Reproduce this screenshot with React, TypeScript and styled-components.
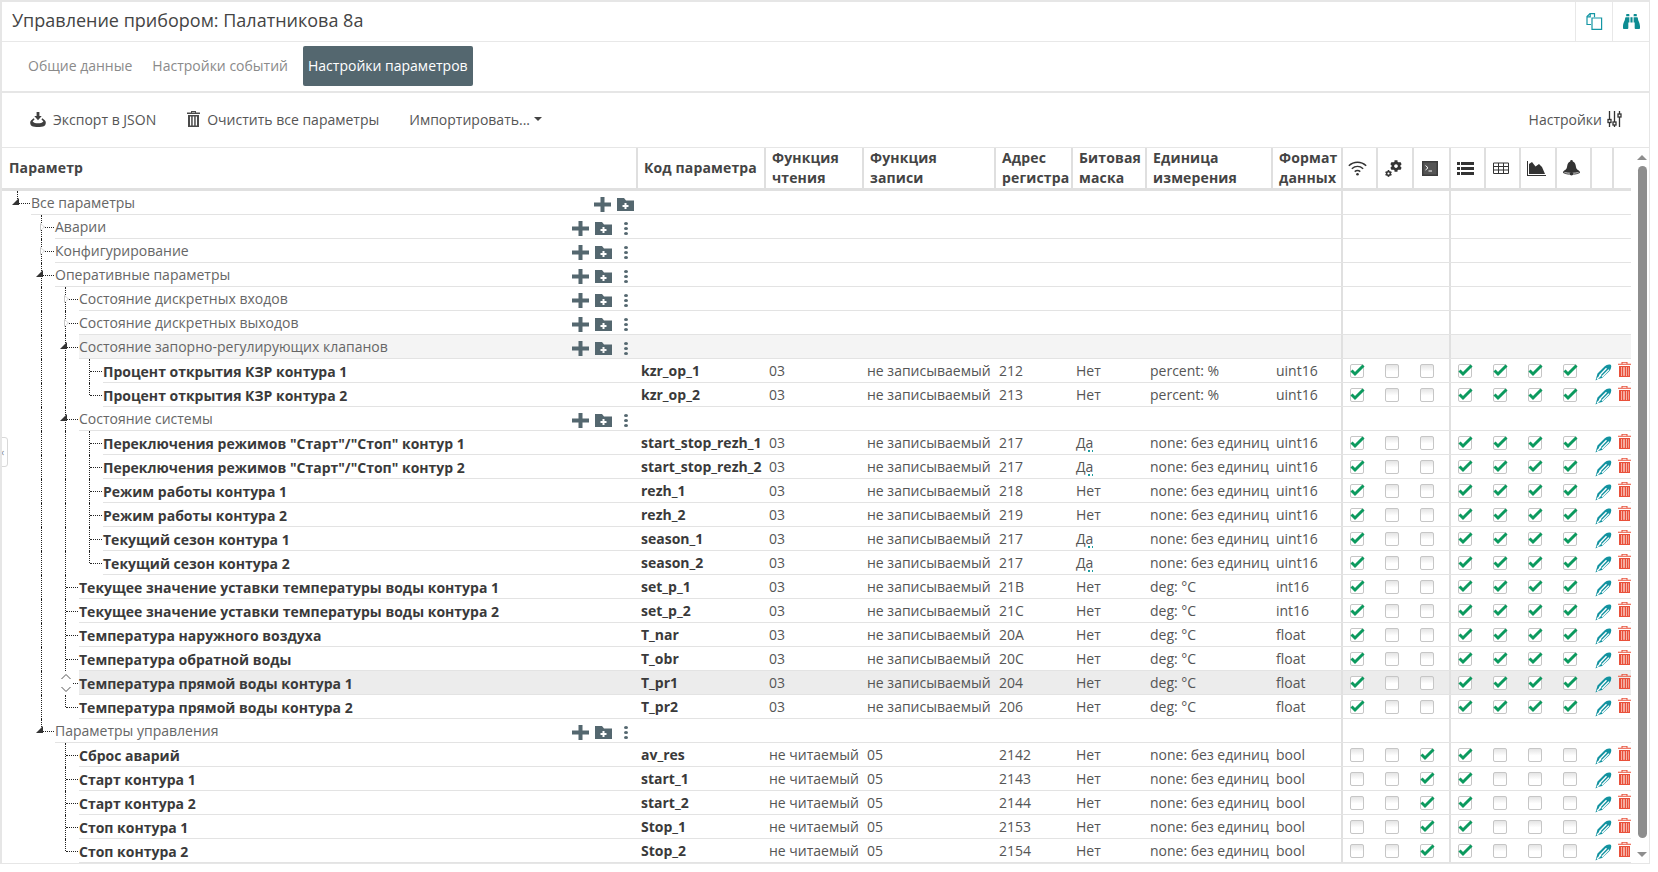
import React from 'react';
import styled, { createGlobalStyle } from 'styled-components';
import { FaBinoculars, FaCog } from 'react-icons/fa';

const GlobalStyle = createGlobalStyle`
  html, body {
    margin: 0;
    padding: 0;
    background: #fff;
    overflow: hidden;
  }
  body {
    font-family: "Open Sans", "Liberation Sans", sans-serif;
    font-size: 14px;
    color: #555;
  }
`;

const COLUMNS = '634px 128px 98px 132px 77px 74px 126px 70px 35px 36px 37px 35px 35px 36px 35px 22px 19px';

const Page = styled.div`
  position: relative;
  width: 1650px;
  height: 864px;
  box-sizing: border-box;
  border: 1px solid #e6e6e6;
  border-top-width: 2px;
  border-left-width: 2px;
  overflow: hidden;
`;

const TitleBar = styled.div`
  height: 39px;
  display: flex;
  align-items: center;
  border-bottom: 1px solid #e8e8e8;
`;

const Title = styled.h1`
  flex: 1;
  margin: 0 0 4px 10px;
  font-size: 18px;
  font-weight: 400;
  color: #444;
`;

const TitleButton = styled.div`
  width: 36px;
  height: 39px;
  display: flex;
  align-items: center;
  justify-content: center;
  border-left: 1px solid #e8e8e8;
  color: #0d8c92;
`;

const Tabs = styled.div`
  height: 51px;
  display: flex;
  align-items: flex-start;
  padding: 4px 0 0 21px;
  box-sizing: border-box;
  border-bottom: 2px solid #e6e6e6;
`;

const Tab = styled.div<{ $active?: boolean }>`
  height: 40px;
  line-height: 39px;
  padding: 0 5px;
  margin-right: 10px;
  border-radius: 2px;
  color: ${(p) => (p.$active ? '#fff' : '#8a8a8a')};
  background: ${(p) => (p.$active ? '#54676f' : 'transparent')};
`;

const Toolbar = styled.div`
  height: 55px;
  display: flex;
  align-items: center;
  padding: 0 27px 2px 28px;
  box-sizing: border-box;
  border-bottom: 1px solid #e6e6e6;
`;

const ToolButton = styled.div`
  display: flex;
  align-items: center;
  gap: 7px;
  margin-right: 30px;
  color: #555;
  white-space: nowrap;
  &:first-child {
    margin-right: 31px;
  }
`;

const SettingsButton = styled(ToolButton)`
  margin: 0 0 0 auto;
  gap: 5px;
`;

const Caret = styled.span`
  width: 0;
  height: 0;
  margin-left: -3px;
  border-left: 4px solid transparent;
  border-right: 4px solid transparent;
  border-top: 4px solid #444;
`;

const HeaderRow = styled.div`
  width: 1629px;
  height: 43px;
  display: grid;
  grid-template-columns: ${COLUMNS};
  box-sizing: border-box;
  border-bottom: 3px solid #e0e0e0;
`;

const HeaderCell = styled.div`
  display: flex;
  align-items: center;
  padding: 0 0 0 6px;
  box-sizing: border-box;
  border-left: 2px solid #dfdfdf;
  font-weight: 700;
  line-height: 20px;
  color: #444;
  letter-spacing: 0.01em;
  white-space: pre-line;
  &:first-child {
    border-left: 0;
    padding-left: 7px;
  }
`;

const IconCell = styled(HeaderCell)`
  justify-content: center;
  padding: 0 4px 0 0;
  color: #333;
`;

const Body = styled.div`
  position: relative;
`;

const Row = styled.div<{ $level: number; $tint?: string }>`
  position: relative;
  width: 1629px;
  height: 24px;
  display: grid;
  grid-template-columns: ${COLUMNS};
  line-height: 23px;
  &::before {
    content: '';
    position: absolute;
    top: 0;
    bottom: 0;
    right: 0;
    left: ${(p) => 29 + p.$level * 24}px;
    background: ${(p) => p.$tint || 'transparent'};
    border-bottom: 1px solid #e3e3e3;
  }
`;

const TreeCell = styled.div<{ $level: number; $leaf: boolean }>`
  position: relative;
  display: flex;
  align-items: center;
  padding-left: ${(p) => 29 + p.$level * 24}px;
  padding-right: ${(p) => (p.$level === 0 ? 2 : 8)}px;
  color: ${(p) => (p.$leaf ? '#3a3a3a' : '#666')};
  font-weight: ${(p) => (p.$leaf ? 700 : 400)};
  white-space: nowrap;
`;

const Label = styled.span<{ $leaf: boolean }>`
  position: relative;
  top: ${(p) => (p.$leaf ? 0 : -1)}px;
  flex: 1;
`;

const VLine = styled.i<{ $level: number; $half?: boolean }>`
  position: absolute;
  top: 0;
  left: ${(p) => 15 + p.$level * 24}px;
  height: ${(p) => (p.$half ? '12px' : '24px')};
  border-left: 1px dotted #222;
`;

const HLine = styled.i<{ $level: number }>`
  position: absolute;
  top: 12px;
  left: ${(p) => 16 + p.$level * 24}px;
  width: 12px;
  border-top: 1px dotted #222;
`;

const Opened = styled.i<{ $level: number }>`
  position: absolute;
  top: 7px;
  left: ${(p) => 10 + p.$level * 24}px;
  width: 0;
  height: 0;
  border-bottom: 7px solid #333;
  border-left: 7px solid transparent;
`;

const Closed = styled.i<{ $level: number }>`
  position: absolute;
  top: 8px;
  left: ${(p) => 14 + p.$level * 24}px;
  width: 0;
  height: 0;
  border-left: 5px solid #c8c8c8;
  border-top: 4px solid transparent;
  border-bottom: 4px solid transparent;
  &::after {
    content: '';
    position: absolute;
    top: -3px;
    left: -4px;
    width: 0;
    height: 0;
    border-left: 3px solid #fff;
    border-top: 3px solid transparent;
    border-bottom: 3px solid transparent;
  }
`;

const SortArrows = styled.div`
  position: absolute;
  top: 0;
  left: 57px;
  width: 14px;
  height: 24px;
  background: #fff;
  color: #555;
`;

const Actions = styled.div`
  position: relative;
  top: 1px;
  display: flex;
  align-items: center;
  color: #54676f;
`;

const ActionIcon = styled.svg`
  display: block;
  margin-left: 6px;
  fill: currentColor;
`;

const Dots = styled.div`
  width: 4px;
  margin-left: 12px;
  display: flex;
  flex-direction: column;
  gap: 2px;
  i {
    display: block;
    width: 4px;
    height: 3px;
    border-radius: 50%;
    background: #54676f;
  }
`;

const TextCell = styled.div`
  position: relative;
  padding-left: 5px;
  color: #555;
  white-space: nowrap;
  overflow: hidden;
`;

const CodeCell = styled(TextCell)`
  font-weight: 700;
  color: #3a3a3a;
`;

const BitValue = styled.span<{ $yes: boolean }>`
  text-decoration: ${(p) => (p.$yes ? 'underline dotted #1f9da0 2px' : 'none')};
  text-underline-offset: 2px;
`;

const FlagCell = styled.div<{ $divider?: boolean; $pad?: number }>`
  position: relative;
  display: flex;
  align-items: center;
  padding-left: ${(p) => p.$pad ?? 7}px;
  height: 23px;
  border-left: ${(p) => (p.$divider ? '2px solid #e0e0e0' : '2px solid transparent')};
`;

const FolderDivider = styled(FlagCell)`
  display: block;
`;

const EditCell = styled.div<{ $shift: number; $lift: number }>`
  position: relative;
  top: ${(p) => p.$lift}px;
  display: flex;
  align-items: center;
  padding-left: ${(p) => p.$shift}px;
`;

const Check = styled.span<{ $on: boolean }>`
  position: relative;
  width: 14px;
  height: 14px;
  box-sizing: border-box;
  border: 1px solid #c6c6c6;
  border-radius: 2px;
  background: ${(p) => (p.$on ? '#fff' : 'linear-gradient(#e4e4e4, #fff 55%)')};
  svg {
    position: absolute;
    left: -1px;
    top: -2px;
  }
`;

const ScrollBar = styled.div`
  position: absolute;
  top: 147px;
  right: 0;
  width: 18px;
  bottom: 0;
`;

const ScrollThumb = styled.div`
  position: absolute;
  top: 17px;
  left: 7px;
  width: 9px;
  height: 672px;
  border-radius: 5px;
  background: #8e8e8e;
`;

const ScrollArrow = styled.i<{ $down?: boolean }>`
  position: absolute;
  left: 6px;
  width: 0;
  height: 0;
  border-left: 5px solid transparent;
  border-right: 5px solid transparent;
  ${(p) => (p.$down ? 'bottom: 6px; border-top: 5px solid #8e8e8e;' : 'top: 6px; border-bottom: 5px solid #8e8e8e;')}
`;

const SideHandle = styled.div`
  position: absolute;
  top: 435px;
  left: -2px;
  width: 8px;
  height: 30px;
  box-sizing: border-box;
  border: 1px solid #d8d8d8;
  border-radius: 0 3px 3px 0;
  background: #fff;
  color: #888;
  font-size: 11px;
  line-height: 28px;
`;

const CopyIcon = () => (
  <svg width="17" height="17" viewBox="0 0 17 17" fill="none" stroke="#1496a4" strokeWidth="1.2">
    <path d="M5 11.5H1V3.5L4 .7h4.5v3.6" />
    <path d="M1 3.8h3.2V.8" />
    <path d="M6 5h9.600v11.400H6z" />
  </svg>
);

const ExportIcon = () => (
  <svg width="16" height="15" viewBox="0 0 16 15" fill="#3f3f3f">
    <path d="M6.6 0h2.8v4h2.3L8 8.2 4.3 4h2.3z" />
    <path d="M3.6 6.2 1 8.5C-.6 10 .2 14 3 14.6c3 .6 7 .6 10 0 2.8-.6 3.6-4.6 2-6.1l-2.6-2.3-1 1 2 2.2c-2 2.6-8.800 2.6-10.800 0l2-2.200z" />
  </svg>
);

const TrashTool = () => (
  <svg width="13" height="16" viewBox="0 0 13 16" fill="#4a4a4a">
    <path d="M4 0h5v1.500h4V3H0V1.500h4zM5 .9v.7h3V.9z" />
    <path d="M1 4h11v12H1zM3 5.500v9h1.200v-9zm2.700 0v9h1.500v-9zm3 0v9h1.300v-9z" fillRule="evenodd" />
  </svg>
);

const SlidersIcon = () => (
  <svg width="15" height="16" viewBox="0 0 15 16" fill="none" stroke="#333" strokeWidth="1.300">
    <path d="M2.500 0v16M7.500 0v16M12.500 0v16" />
    <rect x="1" y="8.500" width="3" height="3" fill="#fff" />
    <rect x="6" y="11" width="3" height="3" fill="#fff" />
    <rect x="11" y="3" width="3" height="3" fill="#fff" />
  </svg>
);

const WifiIcon = () => (
  <svg width="19" height="15" viewBox="0 0 19 15" fill="none" stroke="#333" strokeWidth="1.400">
    <path d="M.8 4.800c5-4.700 12.400-4.700 17.400 0" />
    <path d="M3.800 7.800c3.400-3 8-3 11.400 0" />
    <path d="M6.700 10.600c1.700-1.300 3.900-1.300 5.600 0" />
    <circle cx="9.500" cy="13.300" r="1.300" fill="#333" stroke="none" />
  </svg>
);

const GearsBox = styled.div`
  position: relative;
  width: 17px;
  height: 17px;
  svg {
    position: absolute;
  }
  svg:first-child {
    top: 0;
    right: 0;
  }
  svg:last-child {
    bottom: 0;
    left: 0;
  }
`;

const GearsIcon = () => (
  <GearsBox>
    <FaCog size={12} />
    <FaCog size={7} />
  </GearsBox>
);

const TerminalIcon = () => (
  <svg width="16" height="15" viewBox="0 0 16 15">
    <rect width="16" height="15" fill="#3c3c3c" />
    <rect x="1.500" y="1.500" width="13" height="12" fill="#555" />
    <path d="M3.500 4.500 6 6.800 3.500 9" fill="none" stroke="#fff" strokeWidth="1" />
    <path d="M6.500 10h3.500" stroke="#fff" strokeWidth="1" />
  </svg>
);

const ListIcon = () => (
  <svg width="17" height="13" viewBox="0 0 17 13" fill="#333">
    <path d="M0 0h3v3H0zM4 0h13v3H4zM0 5h3v3H0zM4 5h13v3H4zM0 10h3v3H0zM4 10h13v3H4z" />
  </svg>
);

const TableIcon = () => (
  <svg width="16" height="12" viewBox="0 0 16 12" fill="none" stroke="#333" strokeWidth="1">
    <path d="M.5 1h15v10.500H.500zM.5 4.500h15M.5 8h15M5.500 1v10.500M10.500 1v10.500" />
  </svg>
);

const ChartIcon = () => (
  <svg width="19" height="15" viewBox="0 0 19 15" fill="#333">
    <path d="M0 0h1v14h18v1H0z" />
    <path d="M2 13V3l3-2 3.500 4.500L12 3l3 3 3 7z" />
  </svg>
);

const BellIcon = () => (
  <svg width="17" height="16" viewBox="0 0 17 16" fill="#333">
    <path d="M8.500 0a1.300 1.300 0 0 1 1.300 1.400C12 2.300 12.600 4 12.800 6c.2 2 .9 3 2 4 1.500.9 2.200 1.500 2.200 2.200 0 1.400-3.800 2.300-8.500 2.300S0 13.600 0 12.200c0-.7.700-1.300 2.200-2.200 1.100-1 1.800-2 2-4 .2-2 .8-3.700 3-4.600A1.300 1.300 0 0 1 8.500 0z" />
    <path d="M1.500 12.400c2 1.100 12 1.100 14 0" fill="none" stroke="#fff" strokeWidth=".8" />
    <circle cx="8.500" cy="13.800" r="1.800" />
  </svg>
);

const PlusIcon = () => (
  <ActionIcon width="17" height="15" viewBox="0 0 17 15">
    <path d="M6.500 0h4v5.500H17v4h-6.500V15h-4V9.500H0v-4h6.500z" />
  </ActionIcon>
);

const FolderPlusIcon = () => (
  <ActionIcon width="17" height="13" viewBox="0 0 17 13">
    <path d="M0 0h7l2 2.500h8V13H0zM7.500 5v2H5.500v2h2v2h2V9h2V7h-2V5z" fillRule="evenodd" />
  </ActionIcon>
);

const DotsIcon = () => (
  <Dots>
    <i />
    <i />
    <i />
  </Dots>
);

const PencilIcon = () => (
  <svg width="17" height="17" viewBox="0 0 17 17">
    <path d="M.5 16.500 2.500 9.500 9.500 2.500C11.500.7 14 0 16 1c.8 2-.2 4.500-2 6.500l-7 6.500-4 1z" fill="#1293a0" />
    <path d="M4.300 11.800 11.500 4.300M7 12.800l7-7.200M2 15 6 11" stroke="#fff" strokeWidth="1.300" fill="none" />
  </svg>
);

const TrashRed = () => (
  <svg width="13" height="15" viewBox="0 0 13 15" fill="#e9503a">
    <path d="M3.500 0h6v1.800H13v1H0v-1h3.500zm1 .8v1h4v-1z" fillRule="evenodd" />
    <path d="M1 4h11v11H1zm2 1.200v8.600h1V5.200zm2.500 0v8.600h1V5.200zm2.500 0v8.600h1V5.200z" fillRule="evenodd" />
    <path d="M3 5.200h1v8.600H3zM5.500 5.200h1v8.600h-1zM8 5.200h1v8.600H8zM10.200 5.200h.8v8.600h-.8z" fill="#f6b0a4" />
  </svg>
);

const CheckMark = () => (
  <svg width="15" height="14" viewBox="0 0 15 14" fill="none" stroke="#0b9a5e" strokeWidth="3">
    <path d="M1.500 7.500 5 11 13.500 2.500" />
  </svg>
);

const Chevrons = () => (
  <svg width="14" height="24" viewBox="0 0 14 24" fill="none" stroke="#555" strokeWidth="1">
    <path d="M2.500 8 7 3.500 11.500 8M2.500 16 7 20.500 11.500 16" />
  </svg>
);

type Param = {
  code: string;
  read: string;
  write: string;
  addr: string;
  bit: string;
  unit: string;
  format: string;
  flags: string;
};

type TreeRow = {
  label: string;
  level: number;
  open?: boolean;
  tint?: string;
  sort?: boolean;
  param?: Param;
};

const NONE = 'none: без единиц';
const NW = 'не записываемый';
const NR = 'не читаемый';

function readable(code: string, addr: string, bit: string, unit: string, format: string): Param {
  return { code, read: '03', write: NW, addr, bit, unit, format, flags: '1001111' };
}

function writable(code: string, addr: string): Param {
  return { code, read: NR, write: '05', addr, bit: 'Нет', unit: NONE, format: 'bool', flags: '0011000' };
}

const ROWS: TreeRow[] = [
  { label: 'Все параметры', level: 0, open: true },
  { label: 'Аварии', level: 1 },
  { label: 'Конфигурирование', level: 1 },
  { label: 'Оперативные параметры', level: 1, open: true },
  { label: 'Состояние дискретных входов', level: 2 },
  { label: 'Состояние дискретных выходов', level: 2 },
  { label: 'Состояние запорно-регулирующих клапанов', level: 2, open: true, tint: '#f4f4f4' },
  { label: 'Процент открытия КЗР контура 1', level: 3, param: readable('kzr_op_1', '212', 'Нет', 'percent: %', 'uint16') },
  { label: 'Процент открытия КЗР контура 2', level: 3, param: readable('kzr_op_2', '213', 'Нет', 'percent: %', 'uint16') },
  { label: 'Состояние системы', level: 2, open: true },
  { label: 'Переключения режимов "Старт"/"Стоп" контур 1', level: 3, param: readable('start_stop_rezh_1', '217', 'Да', NONE, 'uint16') },
  { label: 'Переключения режимов "Старт"/"Стоп" контур 2', level: 3, param: readable('start_stop_rezh_2', '217', 'Да', NONE, 'uint16') },
  { label: 'Режим работы контура 1', level: 3, param: readable('rezh_1', '218', 'Нет', NONE, 'uint16') },
  { label: 'Режим работы контура 2', level: 3, param: readable('rezh_2', '219', 'Нет', NONE, 'uint16') },
  { label: 'Текущий сезон контура 1', level: 3, param: readable('season_1', '217', 'Да', NONE, 'uint16') },
  { label: 'Текущий сезон контура 2', level: 3, param: readable('season_2', '217', 'Да', NONE, 'uint16') },
  { label: 'Текущее значение уставки температуры воды контура 1', level: 2, param: readable('set_p_1', '21B', 'Нет', 'deg: °C', 'int16') },
  { label: 'Текущее значение уставки температуры воды контура 2', level: 2, param: readable('set_p_2', '21C', 'Нет', 'deg: °C', 'int16') },
  { label: 'Температура наружного воздуха', level: 2, param: readable('T_nar', '20A', 'Нет', 'deg: °C', 'float') },
  { label: 'Температура обратной воды', level: 2, param: readable('T_obr', '20C', 'Нет', 'deg: °C', 'float') },
  { label: 'Температура прямой воды контура 1', level: 2, tint: '#ececec', sort: true, param: readable('T_pr1', '204', 'Нет', 'deg: °C', 'float') },
  { label: 'Температура прямой воды контура 2', level: 2, param: readable('T_pr2', '206', 'Нет', 'deg: °C', 'float') },
  { label: 'Параметры управления', level: 1, open: true },
  { label: 'Сброс аварий', level: 2, param: writable('av_res', '2142') },
  { label: 'Старт контура 1', level: 2, param: writable('start_1', '2143') },
  { label: 'Старт контура 2', level: 2, param: writable('start_2', '2144') },
  { label: 'Стоп контура 1', level: 2, param: writable('Stop_1', '2153') },
  { label: 'Стоп контура 2', level: 2, param: writable('Stop_2', '2154') },
];

// a guide of this level goes on past the row while a sibling is still to come
function guideContinues(index: number, level: number) {
  for (let i = index + 1; i < ROWS.length; i += 1) {
    if (ROWS[i].level === level) return true;
    if (ROWS[i].level < level) return false;
  }
  return false;
}

const TreeGuides: React.FC<{ index: number; row: TreeRow }> = ({ index, row }) => {
  const levels = Array.from({ length: row.level + 1 }, (_, i) => i);
  return (
    <>
      {levels.map((level) => {
        const goesOn = guideContinues(index, level);
        if (level < row.level) {
          return goesOn ? <VLine key={level} $level={level} /> : null;
        }
        return <VLine key={level} $level={level} $half={!goesOn} />;
      })}
      <HLine $level={row.level} />
      {row.sort && <SortArrows><Chevrons /></SortArrows>}
      {!row.param && (row.open ? <Opened $level={row.level} /> : <Closed $level={row.level} />)}
    </>
  );
};

const Flags: React.FC<{ flags: string }> = ({ flags }) => (
  <>
    {flags.split('').map((flag, i) => (
      <FlagCell key={i} $divider={i === 0 || i === 3} $pad={i === 2 || i === 6 ? 6 : 7}>
        <Check $on={flag === '1'}>{flag === '1' && <CheckMark />}</Check>
      </FlagCell>
    ))}
  </>
);

const BodyRow: React.FC<{ index: number; row: TreeRow }> = ({ index, row }) => {
  const { param } = row;
  return (
    <Row $level={row.level} $tint={row.tint}>
      <TreeCell $level={row.level} $leaf={!!param}>
        <TreeGuides index={index} row={row} />
        <Label $leaf={!!param}>{row.label}</Label>
        {!param && (
          <Actions>
            <PlusIcon />
            <FolderPlusIcon />
            {row.level > 0 && <DotsIcon />}
          </Actions>
        )}
      </TreeCell>
      {param ? (
        <>
          <CodeCell>{param.code}</CodeCell>
          <TextCell>{param.read}</TextCell>
          <TextCell>{param.write}</TextCell>
          <TextCell>{param.addr}</TextCell>
          <TextCell><BitValue $yes={param.bit === 'Да'}>{param.bit}</BitValue></TextCell>
          <TextCell>{param.unit}</TextCell>
          <TextCell>{param.format}</TextCell>
          <Flags flags={param.flags} />
          <EditCell $shift={5} $lift={1}><PencilIcon /></EditCell>
          <EditCell $shift={6} $lift={-2}><TrashRed /></EditCell>
        </>
      ) : (
        <>
          <span />
          <span />
          <span />
          <span />
          <span />
          <span />
          <span />
          <FolderDivider $divider />
          <span />
          <span />
          <FolderDivider $divider />
        </>
      )}
    </Row>
  );
};

const App: React.FC = () => (
  <Page>
    <GlobalStyle />
    <TitleBar>
      <Title>Управление прибором: Палатникова 8а</Title>
      <TitleButton><CopyIcon /></TitleButton>
      <TitleButton><FaBinoculars size={17} /></TitleButton>
    </TitleBar>
    <Tabs>
      <Tab>Общие данные</Tab>
      <Tab>Настройки событий</Tab>
      <Tab $active>Настройки параметров</Tab>
    </Tabs>
    <Toolbar>
      <ToolButton><ExportIcon />Экспорт в JSON</ToolButton>
      <ToolButton><TrashTool />Очистить все параметры</ToolButton>
      <ToolButton>Импортировать...<Caret /></ToolButton>
      <SettingsButton>Настройки <SlidersIcon /></SettingsButton>
    </Toolbar>
    <HeaderRow>
      <HeaderCell>Параметр</HeaderCell>
      <HeaderCell>Код параметра</HeaderCell>
      <HeaderCell>{'Функция\nчтения'}</HeaderCell>
      <HeaderCell>{'Функция\nзаписи'}</HeaderCell>
      <HeaderCell>{'Адрес\nрегистра'}</HeaderCell>
      <HeaderCell>{'Битовая\nмаска'}</HeaderCell>
      <HeaderCell>{'Единица\nизмерения'}</HeaderCell>
      <HeaderCell>{'Формат\nданных'}</HeaderCell>
      <IconCell><WifiIcon /></IconCell>
      <IconCell><GearsIcon /></IconCell>
      <IconCell><TerminalIcon /></IconCell>
      <IconCell><ListIcon /></IconCell>
      <IconCell><TableIcon /></IconCell>
      <IconCell><ChartIcon /></IconCell>
      <IconCell><BellIcon /></IconCell>
      <IconCell />
      <IconCell />
    </HeaderRow>
    <Body>
      {ROWS.map((row, i) => (
        <BodyRow key={row.label} index={i} row={row} />
      ))}
    </Body>
    <ScrollBar>
      <ScrollArrow />
      <ScrollThumb />
      <ScrollArrow $down />
    </ScrollBar>
    <SideHandle>‹</SideHandle>
  </Page>
);

export default App;
